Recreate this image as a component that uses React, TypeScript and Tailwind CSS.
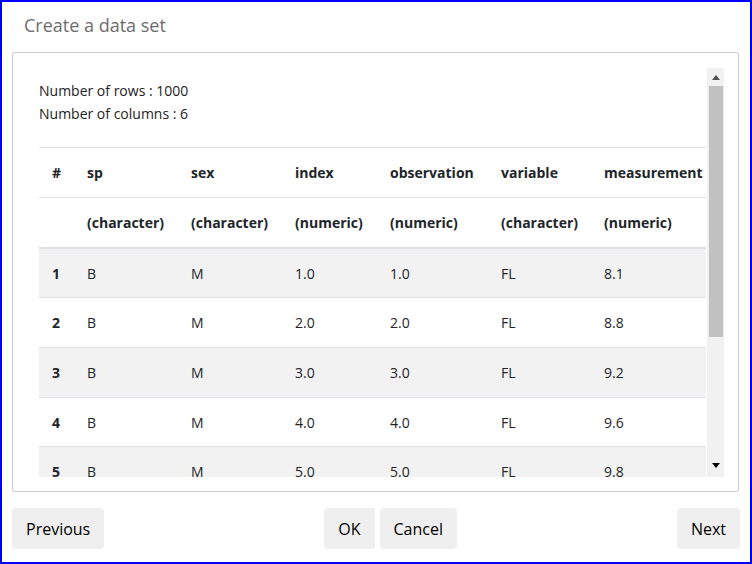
const columns = [
  { name: "sp", type: "(character)", w: "w-[104px]" },
  { name: "sex", type: "(character)", w: "w-[104px]" },
  { name: "index", type: "(numeric)", w: "w-[95px]" },
  { name: "observation", type: "(numeric)", w: "w-[111px]" },
  { name: "variable", type: "(character)", w: "w-[103px]" },
  { name: "measurement", type: "(numeric)", w: "w-[114px]" },
];

const rows = [
  ["B", "M", "1.0", "1.0", "FL", "8.1"],
  ["B", "M", "2.0", "2.0", "FL", "8.8"],
  ["B", "M", "3.0", "3.0", "FL", "9.2"],
  ["B", "M", "4.0", "4.0", "FL", "9.6"],
  ["B", "M", "5.0", "5.0", "FL", "9.8"],
];

const rowHeights = ["h-[49px]", "h-[50px]", "h-[50px]", "h-[49px]", "h-[50px]"];

function Scrollbar() {
  return (
    <div className="flex w-[17px] shrink-0 flex-col bg-[#f1f1f1]">
      <div className="flex h-[18px] items-center justify-center">
        <svg width="8" height="5" viewBox="0 0 8 5">
          <path d="M0 5 L4 0 L8 5 Z" fill="#505050" />
        </svg>
      </div>
      <div className="mx-auto h-[251px] w-[14px] bg-[#c1c1c1]" />
      <div className="flex-1" />
      <div className="flex h-[18px] items-start justify-center pt-[4px]">
        <svg width="8" height="5" viewBox="0 0 8 5">
          <path d="M0 0 L8 0 L4 5 Z" fill="#000000" />
        </svg>
      </div>
    </div>
  );
}

function DataTable() {
  return (
    <div className="w-[667px] text-[14px] text-[#212529]">
      <div className="flex h-[50px] items-center border-t border-[#dee2e6] font-bold">
        <div className="w-[36px] pl-[13px]">#</div>
        {columns.map((c) => (
          <div key={c.name} className={`${c.w} pl-[12px]`}>
            {c.name}
          </div>
        ))}
      </div>
      <div className="flex h-[52px] items-center border-y border-b-2 border-[#dee2e6] font-bold">
        <div className="w-[36px]" />
        {columns.map((c) => (
          <div key={c.name} className={`${c.w} pl-[12px]`}>
            {c.type}
          </div>
        ))}
      </div>
      {rows.map((r, i) => (
        <div
          key={i}
          className={`flex ${rowHeights[i]} items-center border-b border-[#dee2e6] ${i % 2 === 0 ? "bg-[#f2f2f2]" : "bg-white"}`}
        >
          <div className="w-[36px] pl-[13px] font-bold">{i + 1}</div>
          {r.map((v, j) => (
            <div key={j} className={`${columns[j].w} pl-[12px]`}>
              {v}
            </div>
          ))}
        </div>
      ))}
    </div>
  );
}

function Button({ label, className = "" }: { label: string; className?: string }) {
  return (
    <button
      type="button"
      className={`h-[41px] rounded-[4px] bg-[#efefef] px-[14px] text-[16px] text-black ${className}`}
    >
      {label}
    </button>
  );
}

export default function App() {
  return (
    <div className="flex h-[564px] w-[752px] flex-col border-2 border-[#0000ff] bg-white font-['Open_Sans',sans-serif]">
      <div className="flex h-[50px] items-center pb-[4px] pl-[22px] text-[18px] text-[#6c6c6c]">Create a data set</div>
      <div className="mx-[10px] flex h-[440px] w-[727px] rounded-[3px] border border-[#c8ccd2] pb-[14px] pl-[11px] pr-[14px] pt-[15px]">
        <div className="flex flex-1 overflow-hidden">
          <div className="flex-1 overflow-hidden pl-[15px] pt-[11px]">
            <div className="text-[14px] leading-[23px] text-[#222]">
              <p>Number of rows : 1000</p>
              <p>Number of columns : 6</p>
            </div>
            <div className="mt-[22px]">
              <DataTable />
            </div>
          </div>
          <Scrollbar />
        </div>
      </div>
      <div className="mt-[16px] flex px-[10px]">
        <Button label="Previous" />
        <Button label="OK" className="ml-[220px]" />
        <Button label="Cancel" className="ml-[5px]" />
        <Button label="Next" className="ml-auto" />
      </div>
    </div>
  );
}
